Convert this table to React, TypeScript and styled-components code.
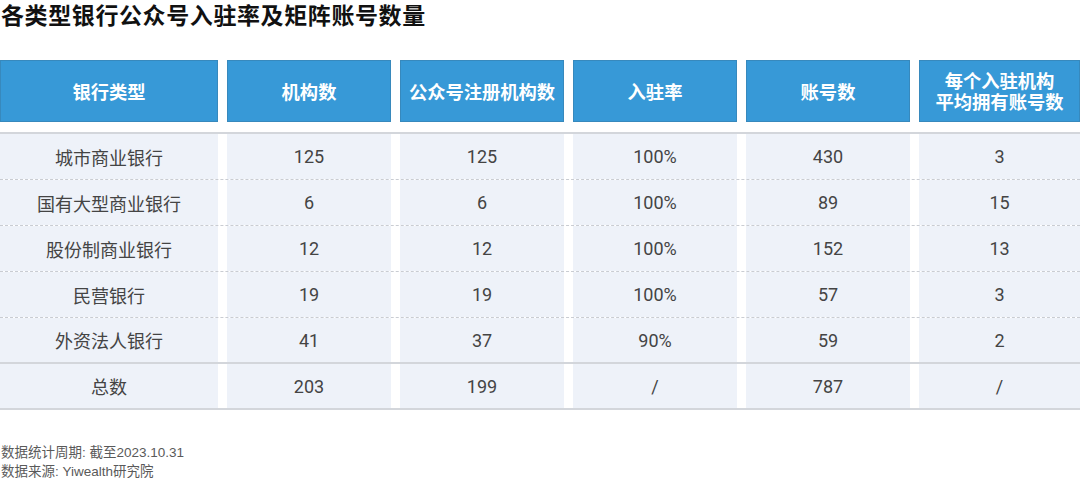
import React from "react";
import styled, { createGlobalStyle } from "styled-components";

const GlobalStyle = createGlobalStyle`
  html, body { margin: 0; padding: 0; background: #ffffff; }
  body { font-family: "Noto Sans CJK SC", "Noto Sans", sans-serif; }
`;

const Page = styled.div`
  width: 1080px;
  height: 478px;
  box-sizing: border-box;
  display: flex;
  flex-direction: column;
`;

const Title = styled.h1`
  margin: 0;
  padding: 0 0 0 1px;
  font-size: 23px;
  line-height: 28px;
  font-weight: 700;
  color: #111111;
  letter-spacing: 0.6px;
`;

const Table = styled.div`
  margin-top: 32px;
  display: flex;
  flex-direction: column;
`;

const Grid = styled.div`
  display: grid;
  grid-template-columns: 218px 164px 164px 164px 164px 1fr;
  column-gap: 9px;
`;

const HeaderRow = styled(Grid)`
  height: 62px;
  margin-bottom: 10px;
`;

const HeaderCell = styled.div`
  background: #3799d7;
  border: 1px solid rgba(60, 80, 100, 0.22);
  box-sizing: border-box;
  display: flex;
  align-items: center;
  justify-content: center;
  text-align: center;
  color: #ffffff;
  font-size: 18.3px;
  font-weight: 700;
  line-height: 21px;
`;

const Body = styled.div`
  border-top: 2px solid #d3d6db;
`;

const Row = styled(Grid)<{ $solid?: boolean }>`
  height: 46px;
  box-sizing: border-box;
  border-bottom: ${(p) => (p.$solid ? "2px solid #d3d6db" : "1px dashed #c9ccd2")};
`;

const Cell = styled.div`
  background: #eef2f9;
  display: flex;
  align-items: center;
  justify-content: center;
  color: #444444;
  font-size: 18px;
  font-family: Roboto, "Noto Sans CJK SC", sans-serif;
`;

const Footer = styled.div`
  margin-top: 33px;
  display: flex;
  flex-direction: column;
  padding-left: 1px;
  font-size: 13.5px;
  line-height: 19px;
  color: #5a5a5a;
  font-family: "Liberation Sans", "Noto Sans CJK SC", sans-serif;
`;

const headers: React.ReactNode[] = [
  "银行类型",
  "机构数",
  "公众号注册机构数",
  "入驻率",
  "账号数",
  <>
    每个入驻机构
    <br />
    平均拥有账号数
  </>,
];

const rows: string[][] = [
  ["城市商业银行", "125", "125", "100%", "430", "3"],
  ["国有大型商业银行", "6", "6", "100%", "89", "15"],
  ["股份制商业银行", "12", "12", "100%", "152", "13"],
  ["民营银行", "19", "19", "100%", "57", "3"],
  ["外资法人银行", "41", "37", "90%", "59", "2"],
  ["总数", "203", "199", "/", "787", "/"],
];

export default function App() {
  return (
    <Page>
      <GlobalStyle />
      <Title>各类型银行公众号入驻率及矩阵账号数量</Title>
      <Table>
        <HeaderRow>
          {headers.map((h, i) => (
            <HeaderCell key={i}>{h}</HeaderCell>
          ))}
        </HeaderRow>
        <Body>
          {rows.map((r, i) => (
            <Row key={i} $solid={i >= rows.length - 2}>
              {r.map((c, j) => (
                <Cell key={j}>{c}</Cell>
              ))}
            </Row>
          ))}
        </Body>
      </Table>
      <Footer>
        <span>数据统计周期: 截至2023.10.31</span>
        <span>数据来源: Yiwealth研究院</span>
      </Footer>
    </Page>
  );
}
